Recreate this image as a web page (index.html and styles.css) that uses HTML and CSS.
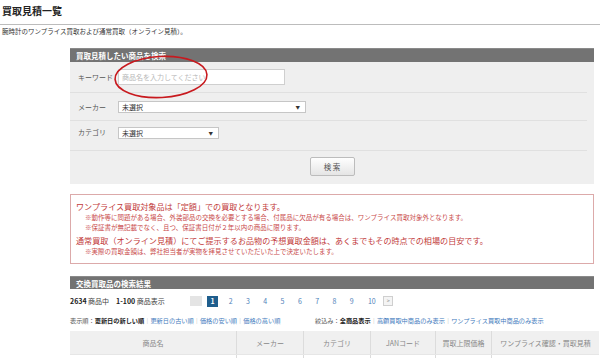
FILE: index.html
```html
<!DOCTYPE html>
<html lang="ja">
<head>
<meta charset="utf-8">
<title>買取見積一覧</title>
<link rel="stylesheet" href="styles.css">
</head>
<body>
<div class="page">
  <h1 class="title">買取見積一覧</h1>
  <p class="lead">腕時計のワンプライス買取および通常買取（オンライン見積）。</p>

  <div class="main">
    <section class="panel">
      <h2 class="panel-head">買取見積したい商品を検索</h2>
      <div class="panel-body">
        <div class="row row-key">
          <span class="label">キーワード</span>
          <input class="input" type="text" placeholder="商品名を入力してください">
        </div>
        <div class="row row-maker">
          <span class="label">メーカー</span>
          <div class="select select-maker"><span>未選択</span><span class="arrow">▼</span></div>
        </div>
        <div class="row row-cat">
          <span class="label">カテゴリ</span>
          <div class="select select-cat"><span>未選択</span><span class="arrow">▼</span></div>
        </div>
        <div class="row row-btn">
          <button class="btn" type="button">検 索</button>
        </div>
      </div>
      <svg class="circle" width="98" height="46" viewBox="0 0 98 46" aria-hidden="true">
        <ellipse cx="49" cy="23" rx="46" ry="20.5" transform="rotate(-3 49 23)" fill="none" stroke="#c8191e" stroke-width="1.6"/>
      </svg>
    </section>

    <div class="notice">
      <p class="big">ワンプライス買取対象品は「定額」での買取となります。</p>
      <p class="small">※動作等に問題がある場合、外装部品の交換を必要とする場合、付属品に欠品が有る場合は、ワンプライス買取対象外となります。</p>
      <p class="small">※保証書が無記載でなく、且つ、保証書日付が２年以内の商品に限ります。</p>
      <p class="big big2">通常買取（オンライン見積）にてご提示するお品物の予想買取金額は、あくまでもその時点での相場の目安です。</p>
      <p class="small">※実際の買取金額は、弊社担当者が実物を拝見させていただいた上で決定いたします。</p>
    </div>

    <section class="results">
      <h2 class="panel-head">交換買取品の検索結果</h2>
      <div class="count-row">
        <span class="count"><b>2634</b> 商品中　<b>1-100</b> 商品表示</span>
        <div class="pager">
          <span class="pg-prev"></span>
          <span class="pg-cur">1</span>
          <span class="pg pg-first">2</span>
          <span class="pg">3</span>
          <span class="pg">4</span>
          <span class="pg">5</span>
          <span class="pg">6</span>
          <span class="pg">7</span>
          <span class="pg">8</span>
          <span class="pg">9</span>
          <span class="pg pg-10">10</span>
          <span class="pg-next">&gt;</span>
        </div>
      </div>
      <div class="sort-row">
        <div class="sort-left">表示順：<b>更新日の新しい順</b><span class="sep">｜</span><a>更新日の古い順</a><span class="sep">｜</span><a>価格の安い順</a><span class="sep">｜</span><a>価格の高い順</a></div>
        <div class="sort-right">絞込み：<b>全商品表示</b><span class="sep">｜</span><a>高額買取中商品のみ表示</a><span class="sep">｜</span><a>ワンプライス買取中商品のみ表示</a></div>
      </div>
      <table class="list">
        <thead>
          <tr>
            <th class="c-name">商品名</th>
            <th class="c-maker">メーカー</th>
            <th class="c-cat">カテゴリ</th>
            <th class="c-jan">JANコード</th>
            <th class="c-price">買取上限価格</th>
            <th class="c-act">ワンプライス確認・買取見積</th>
          </tr>
        </thead>
        <tbody>
          <tr><td></td><td></td><td></td><td></td><td></td><td></td></tr>
        </tbody>
      </table>
    </section>
  </div>
</div>
</body>
</html>
```

FILE: styles.css
```css
html, body {
  margin: 0;
  background: #fff;
}
body {
  font-family: "Noto Sans CJK JP", "Noto Sans", sans-serif;
  color: #333;
  overflow: hidden;
}
.page {
  padding: 0 6px 0 2px;
}
.title {
  margin: 0 -6px 0 -2px;
  padding: 4px 0 0 2px;
  height: 20px;
  line-height: 14px;
  font-size: 10px;
  font-weight: bold;
  color: #222;
  border-bottom: 1px solid #bcbcbc;
}
.lead {
  margin: 2px 0 0;
  font-size: 6.5px;
  line-height: 9px;
  color: #333;
}
.main {
  margin: 12px 0 0 68px;
}
.panel {
  position: relative;
}
.panel-head {
  margin: 0;
  height: 14px;
  line-height: 14px;
  padding-left: 6px;
  background: #737373;
  border-top: 1px solid #8a8a8a;
  box-sizing: border-box;
  color: #fff;
  font-size: 7.5px;
  font-weight: bold;
}
.panel-body {
  background: #efefef;
}
.row {
  display: flex;
  align-items: center;
  margin-right: 7px;
  border-bottom: 1px solid #e0e0e0;
}
.row-key { height: 30px; }
.row-maker { height: 27px; }
.row-cat {
  height: 23px;
  padding-top: 6px;
  align-items: flex-start;
}
.row-btn {
  height: 33px;
  margin-right: 0;
  border-bottom: none;
  justify-content: center;
  align-items: flex-start;
}
.label {
  width: 40px;
  padding-left: 8px;
  font-size: 7px;
  color: #555;
}
.input {
  width: 167px;
  height: 16px;
  box-sizing: border-box;
  margin: 0;
  padding: 0 3px;
  border: 1px solid #cfcfcf;
  background: #fff;
  font-family: inherit;
  font-size: 7px;
  outline: none;
}
.input::placeholder {
  color: #b8b8b8;
}
.select {
  display: flex;
  justify-content: space-between;
  align-items: center;
  height: 12px;
  box-sizing: border-box;
  padding: 0 5px 0 3px;
  border: 1px solid #c6c6c6;
  background: #fff;
  font-size: 7px;
  color: #333;
}
.select-maker { width: 188px; }
.select-cat { width: 101px; }
.arrow {
  font-size: 4.5px;
  color: #333;
}
.btn {
  margin-top: 6px;
  width: 45px;
  height: 19px;
  padding: 0;
  border: 1px solid #bcbcbc;
  border-radius: 2px;
  background: linear-gradient(#fefefe, #e5e5e5);
  font-family: inherit;
  font-size: 7.5px;
  color: #555;
}
.circle {
  position: absolute;
  left: 42px;
  top: 6px;
}
.notice {
  margin-top: 10px;
  border: 1px solid #dcaaaa;
  padding: 7px 5px;
}
.notice p {
  margin: 0;
  white-space: nowrap;
}
.big {
  font-size: 8.1px;
  line-height: 10px;
  color: #c23a3a;
}
.big2 {
  margin-top: 4px !important;
}
.small {
  padding-left: 9px;
  font-size: 6.5px;
  line-height: 10px;
  color: #c94a4a;
}
.results {
  margin-top: 12px;
}
.results .panel-head {
  height: 13px;
  line-height: 13px;
}
.count-row {
  display: flex;
  align-items: center;
  height: 24px;
}
.count {
  width: 120px;
  font-size: 7px;
  color: #444;
}
.count b {
  color: #222;
}
.pager {
  display: flex;
  align-items: center;
}
.pg-prev {
  width: 12px;
  height: 10px;
  margin-right: 5px;
  background: #e4e4e4;
}
.pg-cur {
  width: 11px;
  height: 11px;
  line-height: 11px;
  text-align: center;
  background: #1f5e8d;
  color: #fff;
  font-size: 7px;
  font-weight: bold;
}
.pg {
  width: 17.3px;
  text-align: center;
  font-size: 7px;
  color: #4f82b9;
}
.pg-first {
  margin-left: 4px;
}
.pg-10 {
  width: 23px;
}
.pg-next {
  width: 10px;
  height: 10px;
  line-height: 9px;
  box-sizing: border-box;
  border: 1px solid #cfcfcf;
  background: #f4f4f4;
  text-align: center;
  font-size: 5.5px;
  color: #999;
}
.sort-row {
  display: flex;
  margin-top: 3px;
  font-size: 6.2px;
  line-height: 10px;
  color: #555;
  white-space: nowrap;
}
.sort-row b {
  color: #222;
}
.sort-row a {
  color: #3f7bbd;
}
.sep {
  color: #aaa;
}
.sort-left {
  width: 245px;
}
.list {
  margin-top: 5px;
  width: 100%;
  table-layout: fixed;
  border-collapse: collapse;
}
.list th {
  height: 23px;
  padding: 0;
  background: #f0f0f0;
  border-left: 1px solid #dcdcdc;
  border-bottom: 1px solid #e6e6e6;
  font-size: 7px;
  font-weight: normal;
  color: #888;
}
.list td {
  height: 20px;
  padding: 0;
  border-left: 1px solid #dcdcdc;
}
.list th:first-child,
.list td:first-child {
  border-left: none;
}
.c-name { width: 166px; }
.c-maker { width: 66px; }
.c-cat { width: 66px; }
.c-jan { width: 64px; }
.c-price { width: 55px; }
.c-act { width: 107px; }
```
